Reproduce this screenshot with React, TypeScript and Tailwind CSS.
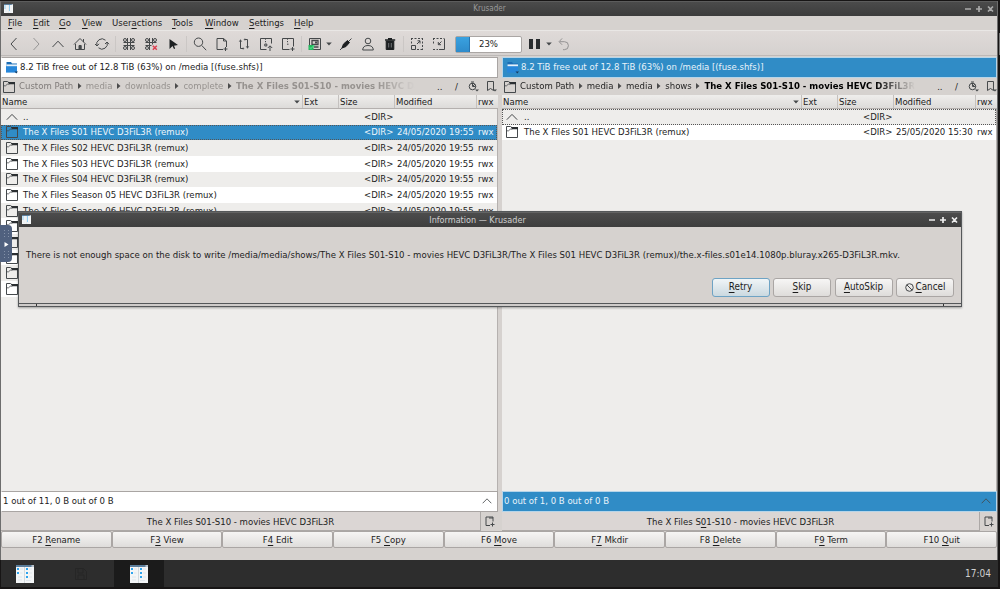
import type { ReactNode } from "react";
import clsx from "clsx";

interface IconProps {
  children: ReactNode;
  className?: string;
  size?: number;
}

function Icon({ children, className, size = 16 }: IconProps) {
  return (
    <svg
      width={size}
      height={size}
      viewBox="0 0 16 16"
      fill="none"
      stroke="currentColor"
      className={clsx("shrink-0", className)}
    >
      {children}
    </svg>
  );
}

function FolderIcon({ className }: { className?: string }) {
  return (
    <svg width="12" height="12" viewBox="0 0 12 12" fill="none" className={clsx("shrink-0", className)}>
      <path d="M.5.5h4L6 1.700h5.500v9.800H.5z" stroke="#45494c" />
      <path d="M5 1h7v2.200H6z" fill="#2b2f32" />
      <path d="M.8 4.800h1.700l1.800-1.600h2" stroke="#45494c" strokeWidth=".8" />
    </svg>
  );
}

function UpIcon({ className }: { className?: string }) {
  return (
    <svg width="12" height="8" viewBox="0 0 12 8" fill="none" className={clsx("shrink-0", className)}>
      <path d="M.8 6.7 6 1.4l5.2 5.3" stroke="currentColor" strokeWidth="1" />
    </svg>
  );
}

function AppIcon({ size }: { size: number }) {
  return (
    <svg width={size} height={size} viewBox="0 0 18 18" className="shrink-0">
      <path d="M0 0h18v18H0z" fill="#f4f6f7" />
      <path d="M0 0h18v2H0z" fill="#5c7e9c" />
      <path d="M15.5 0H18v2h-2.5z" fill="#b9c3cc" />
      <path d="M8.5 2v16" stroke="#d3d9dd" />
      <path d="M1 3h2v2H1zM1 7h2v2H1zM10 3h2v2h-2zM10 7h2v2h-2zM10 11h2v2h-2z" fill="#2da4ef" />
      <path d="M4 4h3M4 8h2.5M13 4h3M13 8h3M13 12h3M10 15.5h5M2 12h4M2 15h4" stroke="#dce3e8" strokeWidth=".8" />
    </svg>
  );
}

function DriveIcon() {
  return (
    <svg width="12" height="12" viewBox="0 0 12 12" className="shrink-0">
      <path d="M.5 0H5l1 1.400h5V5H.5z" fill="#1b6db5" />
      <path d="M.5 2.400h10.500v3H.5z" fill="#e6f2fb" />
      <path d="M0 4.200h11V10.600H0z" fill="#2787da" />
      <path d="M8.500 9.600h3.500L10.300 11.500z" fill="#173c60" />
    </svg>
  );
}

const Down = () => (
  <svg width="6" height="4" viewBox="0 0 6 4" className="shrink-0 fill-[#45484a]">
    <path d="M.2.5h5.600L3 3.500z" />
  </svg>
);

const GRID = (
  <>
    <circle cx="4" cy="4" r="1.500" />
    <circle cx="12" cy="4" r="1.500" />
    <circle cx="4" cy="12" r="1.500" />
    <circle cx="12" cy="12" r="1.500" />
    <path d="M6.500 2v4.500H2.500M9.500 2v4.500h4M2.500 9.500h4V14M13.500 9.500h-4V14M6.500 6.500h3v3h-3z" />
  </>
);

const toolGroups: { icon: ReactNode; faded?: boolean; arrow?: boolean }[][] = [
  [
    { icon: <path d="M10.500 2 5 8l5.500 6" /> },
    { icon: <path d="M5.500 2 11 8l-5.500 6" />, faded: true },
    { icon: <path d="M2.500 11 8 5.200l5.500 5.800" /> },
    {
      icon: (
        <>
          <path d="M2 8.500 8 2.500l6 6M3.500 8v5.500h9V8M11.500 3v3" />
          <path d="M7 9.500h2.200v4H7z" fill="currentColor" />
        </>
      ),
    },
    {
      icon: (
        <>
          <path d="M3 10a5.300 5.300 0 0 1 8.500-5.800M13 6a5.300 5.300 0 0 1-8.500 5.800" />
          <path d="M1 8 3 10l2-2.200M11 8l2-2 2 2.200" />
        </>
      ),
    },
  ],
  [
    { icon: GRID },
    {
      icon: (
        <>
          {GRID}
          <path d="M8.500 8.500h6v6h-6z" fill="#dad5d3" stroke="none" />
          <path d="m9.800 9.800 4 4M13.800 9.800l-4 4" stroke="#db3f50" strokeWidth="1.500" />
        </>
      ),
    },
    { icon: <path d="M4.500 3v10l3-3 1.500 3 1.200-.6L9 9.700l4-.7z" fill="#1d2022" stroke="none" /> },
  ],
  [
    {
      icon: (
        <>
          <circle cx="6.500" cy="6.200" r="4.200" />
          <path d="m9.700 9.400 4.500 4.800" />
        </>
      ),
    },
    {
      icon: (
        <>
          <path d="M9 13.500H3v-11h6.500L12.500 5v6M9.500 2.500V5h3" />
          <path d="M11.500 11v4M9.500 13h4" />
        </>
      ),
    },
    {
      icon: (
        <>
          <path d="M4.500 5v7.500H7M11.500 11V3.500H9" />
          <path d="m3.200 5.500 1.300-2 1.300 2zM10.200 10.500l1.300 2 1.300-2zM7 11.500v2l1-1zM9 2.500v2L8 3.500z" fill="currentColor" strokeWidth=".3" />
        </>
      ),
    },
    {
      icon: (
        <>
          <path d="M8.500 13.500h-6v-11h11v5" />
          <path d="M7.500 2.500v1.200M7.500 5v1.200M6.800 8h2v2h-2z" />
          <path d="M12 15V10M9.800 12 12 9.800 14.200 12" />
        </>
      ),
    },
    {
      icon: (
        <>
          <path d="M9.500 13.500h-7v-11h11v8" />
          <path d="M7.500 2.500v1.200M7.500 5v1.200M7 8.200h1.500" />
          <path d="M12.500 11v4M10.500 13h4" />
        </>
      ),
    },
  ],
  [
    {
      arrow: true,
      icon: (
        <>
          <path d="M2.500 2.500h11v11h-11z" />
          <path d="M5 4.500h6v4H5z" strokeWidth="1.300" />
          <path d="M8 5.500h2v2H8z" fill="currentColor" stroke="none" />
          <path d="M1.500 9h5v5h-5z" fill="#23b35b" stroke="none" />
          <path d="M7 11h4.500" strokeWidth="1.500" />
          <path d="m2.500 11.500 1.300 1.200 3.500-3.500" stroke="#41dc80" strokeWidth="1.300" />
        </>
      ),
    },
    {
      icon: (
        <>
          <path d="m2 14 3.500-3.500M10.500 5.500l3-3" />
          <path d="m5.500 8 4-3.500 2 2-3.500 4-4 1.500z" fill="#1d2022" stroke="#1d2022" />
        </>
      ),
    },
    {
      icon: (
        <>
          <circle cx="8" cy="5" r="2.800" />
          <path d="M2.700 14c0-3 2-4.500 5.300-4.500s5.300 1.500 5.300 4.500z" />
        </>
      ),
    },
    {
      icon: (
        <>
          <path d="M4.200 5h7.600v8.500H4.200z" fill="#1d2022" stroke="#1d2022" />
          <path d="M3 4h10.200M6 2.700h4" stroke="#1d2022" strokeWidth="1.500" />
          <path d="M6.700 7v4.500M9.300 7v4.500" stroke="#85898b" strokeWidth=".8" />
        </>
      ),
    },
  ],
  [
    {
      icon: (
        <>
          <path d="M2.500 9.500h4v4h-4zM8 8l3-3M8.500 4.800H11v2.700" />
          <path d="M2 2.500h12M2.500 2v6M13.500 2v12M8 13.500h6" strokeDasharray="2 1.500" />
        </>
      ),
    },
    {
      icon: (
        <>
          <path d="M8 13.500h5.500V2.500" />
          <path d="M10.500 5.500 7.500 8.500M7.300 6v2.700h2.700" />
          <path d="M2 2.500h11M2.500 2v7M2 13.500h5" strokeDasharray="2 1.500" />
        </>
      ),
    },
  ],
];

function Toolbar() {
  return (
    <div className="flex h-[26px] items-center border-y border-t-[#e9e7e5] border-b-[#bdb9b7] bg-gradient-to-b from-[#dfdad8] to-[#d5d1cf] pt-0.5 pl-0.5 text-[#45484a]">
      {toolGroups.map((group, i) => (
        <div key={i} className="flex items-center">
          {i > 0 && <span className="mx-0.5 h-4 w-px bg-[#cbc7c5]" />}
          {group.map((tool, j) => (
            <div key={j} className={clsx("flex items-center", tool.arrow ? "w-[31px]" : "w-[22px]")}>
              <Icon className={clsx("mx-[3px]", tool.faded && "opacity-45")} size={16}>
                {tool.icon}
              </Icon>
              {tool.arrow && <Down />}
            </div>
          ))}
        </div>
      ))}
      <div className="relative ml-[5px] h-[17px] w-[67px] rounded-xs border border-[#aaa6a4] bg-white">
        <div className="h-full w-3.5 border-r border-[#2675b0] bg-gradient-to-b from-[#3aa2e0] to-[#2e8bcb]" />
        <span className="absolute inset-0 flex items-center justify-center text-[#222]">23%</span>
      </div>
      <div className="ml-[7px] flex gap-[3px]">
        <span className="h-2.5 w-1 bg-[#292c2e]" />
        <span className="h-2.5 w-1 bg-[#292c2e]" />
      </div>
      <div className="ml-[6px]">
        <Down />
      </div>
      <Icon className="ml-1 opacity-50" size={15}>
        <path d="M4 5h5a4.200 4.200 0 0 1 0 8.500H7.500M6.500 1.500 3.300 5l3.200 3.300" />
      </Icon>
    </div>
  );
}

// label with its keyboard accelerator underlined
function Accel({ text }: { text: string }) {
  const at = text.indexOf("&");
  return (
    <span className="whitespace-pre">
      {text.slice(0, at)}
      <span className="underline underline-offset-2">{text[at + 1]}</span>
      {text.slice(at + 2)}
    </span>
  );
}

const menus = [
  { label: "&File", width: "w-[25px]" },
  { label: "&Edit", width: "w-[26px]" },
  { label: "&Go", width: "w-[23px]" },
  { label: "&View", width: "w-[30px]" },
  { label: "User&actions", width: "w-[60px]" },
  { label: "&Tools", width: "w-[33px]" },
  { label: "&Window", width: "w-[44px]" },
  { label: "&Settings", width: "w-[45px]" },
  { label: "&Help", width: "w-[30px]" },
];

function WindowControls({ className }: { className?: string }) {
  return (
    <svg width="30" height="8" viewBox="0 0 30 8" fill="none" stroke="currentColor" strokeWidth="1.700" className={className}>
      <path d="M1 4h6M12 4h6M15 1v6M24 1.500l5 5M29 1.500l-5 5" />
    </svg>
  );
}

interface Row {
  name: string;
  date?: string;
}

interface PanelProps {
  active?: boolean;
  crumbs: string[];
  rows: Row[];
  totals: string;
  tab: ReactNode;
}

function Panel({ active, crumbs, rows, totals, tab }: PanelProps) {
  return (
    <div className={clsx("flex min-w-0 flex-col", active ? "w-[495px]" : "w-[497px]")}>
      <div
        className={clsx(
          "flex h-[21px] items-center gap-0.5 border pl-1",
          active ? "border-[#b6d5e9] bg-[#308cc6] text-[#e9f3fa]" : "border-[#a9a5a3] border-l-white bg-white"
        )}
      >
        <DriveIcon />
        <span className="pb-px whitespace-nowrap">8.2 TiB free out of 12.8 TiB (63%) on /media [(fuse.shfs)]</span>
      </div>
      <div className="flex h-[17px] items-center pl-0.5">
        <FolderIcon />
        <div
          className={clsx(
            "ml-1 flex w-[396px] items-center overflow-hidden pb-px whitespace-nowrap [mask-image:linear-gradient(to_right,black_90%,transparent)]",
            active ? "text-[#242424]" : "text-[#96928f]"
          )}
        >
          {crumbs.map((crumb, i) => (
            <div key={i} className="flex items-center">
              {i > 0 && (
                <svg width="4" height="6" viewBox="0 0 4 6" className="mx-[4.300px] fill-[#4b4b4b]">
                  <path d="M0 0v6l3.500-3z" />
                </svg>
              )}
              <span
                className={clsx(
                  i === crumbs.length - 1 && "font-bold",
                  !active && i === 0 && "text-[#807c7a]",
                  active && i === crumbs.length - 1 && "text-black"
                )}
              >
                {crumb}
              </span>
            </div>
          ))}
        </div>
        <span className="ml-[22px] w-[18px]">..</span>
        <span className="w-[13px]">/</span>
        <svg width="11" height="11" viewBox="0 0 11 11" fill="none" stroke="#45484a" className="mr-[7px]">
          <circle cx="4.500" cy="5.500" r="3.300" />
          <path d="M3 1h3M4.500 2v3.500L7 3M5 5.500h2.500" />
          <path d="M7 8.500h4l-2 2z" fill="#45484a" stroke="none" />
        </svg>
        <svg width="11" height="11" viewBox="0 0 11 11" fill="none" stroke="#45484a">
          <path d="M1.500 9.500v-9h6v9L4.500 7.500z" />
          <path d="M7 8.500h4l-2 2z" fill="#45484a" stroke="none" />
        </svg>
      </div>
      <div className="flex h-[14px] items-center border-b border-[#b4b0ae] bg-gradient-to-b from-[#efeeec] to-[#dddbd9]">
        <div className="flex grow items-center justify-between pr-0.5 pl-[1px]">
          Name
          <Down />
        </div>
        <div className="flex h-full w-9 items-center border-l border-[#c4c1bf] pl-[1px]">Ext</div>
        <div className="flex h-full w-14 items-center border-l border-[#c4c1bf] pl-[1px]">Size</div>
        <div className="flex h-full w-[82px] items-center border-l border-[#c4c1bf] pl-[1px]">Modified</div>
        <div className="flex h-full w-[22px] items-center border-l border-[#c4c1bf] pl-[1px]">rwx</div>
      </div>
      <div className="grow border-r border-[#b5b1af] bg-[#eeedeb]">
        {rows.map((row, i) => {
          const selected = !active && i === 1;
          const focused = selected || (active && i === 0);
          const iconGap = active ? "ml-[3px] mr-px" : "ml-1";
          return (
            <div
              key={i}
              className={clsx(
                "flex h-[15.650px] items-center border border-dotted",
                selected ? "bg-[#308cc6] text-[#eef6fb]" : i % 2 === 1 && "bg-white",
                focused ? "border-[#555]" : "border-transparent"
              )}
            >
              {i === 0 ? <UpIcon className={clsx(iconGap, "text-[#45484a]")} /> : <FolderIcon className={iconGap} />}
              <span className="grow pl-[5px] whitespace-nowrap">{row.name}</span>
              {row.name && <span className="w-[33px]">&lt;DIR&gt;</span>}
              <span className="w-[81px] whitespace-nowrap">{row.date}</span>
              <span className="w-[18px]">{row.date && "rwx"}</span>
            </div>
          );
        })}
      </div>
      <div
        className={clsx(
          "flex h-[21px] items-center justify-between border pr-[5px] pb-px pl-[1px]",
          active ? "border-[#b6d5e9] bg-[#308cc6] text-[#e9f3fa]" : "border-[#a9a5a3] border-l-white bg-white text-[#222]"
        )}
      >
        {totals}
        <UpIcon className="w-2.5 text-[#45484a]" />
      </div>
      <div className="flex h-[19px] items-stretch">
        <div className="flex grow items-center justify-center border-r border-b border-[#aca8a6] bg-[#dbd6d4] pt-px">{tab}</div>
        <div className="flex w-[17px] items-center justify-center">
          <svg width="10" height="11" viewBox="0 0 10 11" fill="none" stroke="#45484a">
            <path d="M5 9.500H1V1h7v4.500M4 2h4" />
            <path d="M7.500 6.500v4M5.500 8.500h4" />
          </svg>
        </div>
      </div>
    </div>
  );
}

const leftRows: Row[] = [
  { name: ".." },
  ...["S01", "S02", "S03", "S04", "Season 05", "Season 06"].map((s) => ({
    name: `The X Files ${s} HEVC D3FiL3R (remux)`,
    date: "24/05/2020 19:55",
  })),
  { name: "" },
  { name: "" },
  { name: "" },
  { name: "" },
  { name: "" },
];

const rightRows: Row[] = [
  { name: ".." },
  { name: "The X Files S01 HEVC D3FiL3R (remux)", date: "25/05/2020 15:30" },
];

const functionKeys = [
  "F2 &Rename",
  "F&3 View",
  "F&4 Edit",
  "F5 &Copy",
  "F6 &Move",
  "F&7 Mkdir",
  "F8 &Delete",
  "F&9 Term",
  "F10 &Quit",
];

function Dialog() {
  const button = "flex h-[19px] w-[58px] items-center justify-center rounded-[3px] border bg-gradient-to-b pb-px text-[9.800px]";
  return (
    <div className="absolute top-[211px] left-[18px] flex h-24 w-[944px] flex-col border border-[#55585a] bg-[#d6d2cf] shadow-[0_1px_2px_#0005]">
      <div className="flex h-[15px] items-center justify-between border-t border-[#646464] bg-gradient-to-b from-[#4c4c4c] to-[#3e3e3e] px-[3px] pb-px text-[#d0d0d0]">
        <AppIcon size={9} />
        <span className="pr-1 text-[9px]">Information — Krusader</span>
        <WindowControls className="text-[#eee]" />
      </div>
      <p className="mt-[21px] ml-[7px] leading-[14px] tracking-[0.016px] whitespace-nowrap">
        There is not enough space on the disk to write /media/media/shows/The X Files S01-S10 - movies HEVC D3FiL3R/The X
        Files S01 HEVC D3FiL3R (remux)/the.x-files.s01e14.1080p.bluray.x265-D3FiL3R.mkv.
      </p>
      <div className="mt-4 mr-[7px] flex justify-end gap-[3.500px]">
        <div className={clsx(button, "border-[#6ea3c4] from-[#f0f5f7] to-[#cbd9e0]")}>
          <Accel text="&Retry" />
        </div>
        <div className={clsx(button, "border-[#aaa6a4] from-[#f7f6f5] to-[#dedcda]")}>
          <Accel text="&Skip" />
        </div>
        <div className={clsx(button, "border-[#aaa6a4] from-[#f7f6f5] to-[#dedcda]")}>
          <Accel text="&AutoSkip" />
        </div>
        <div className={clsx(button, "gap-0.5 border-[#aaa6a4] from-[#f7f6f5] to-[#dedcda]")}>
          <svg width="9" height="9" viewBox="0 0 9 9" fill="none" stroke="#45484a">
            <circle cx="4.500" cy="4.500" r="3.800" />
            <path d="m2 2 5 5" />
          </svg>
          <Accel text="&Cancel" />
        </div>
      </div>
      <div className="mt-auto flex h-[3px] border-t border-[#55585a] bg-[#cfccca]">
        <span className="w-[18px] border-r border-[#333]" />
        <span className="grow" />
        <span className="w-[18px] border-l border-[#333]" />
      </div>
    </div>
  );
}

export default function App() {
  return (
    <div className="relative flex h-[589px] w-[1000px] flex-col overflow-hidden bg-[#171515] pt-px font-['DejaVu_Sans_Condensed','DejaVu_Sans',sans-serif] text-[9.500px] leading-[10px] font-stretch-condensed text-[#1c1c1c]">
      <div className="flex h-[559px] w-[998px] flex-col border-r border-l border-[#6d6d6d] bg-[#d6d2cf]">
        <div className="flex h-[15px] shrink-0 items-center justify-between border-t border-[#5c5c5c] bg-gradient-to-b from-[#4b4b4b] to-[#3c3c3c] px-[3px] pb-px text-[#9a9a9a]">
          <AppIcon size={9} />
          <span className="pl-0.5 text-[8px]">Krusader</span>
          <WindowControls className="text-[#aaa]" />
        </div>
        <div className="flex h-[14px] shrink-0 items-center pb-px pl-[7px]">
          {menus.map((menu) => (
            <span key={menu.label} className={menu.width}>
              <Accel text={menu.label} />
            </span>
          ))}
        </div>
        <Toolbar />
        <div className="flex h-[475px] shrink-0 gap-1 pt-px">
          <Panel
            crumbs={["Custom Path", "media", "downloads", "complete", "The X Files S01-S10 - movies HEVC D3FiL3R"]}
            rows={leftRows}
            totals="1 out of 11, 0 B out of 0 B"
            tab="The X Files S01-S10 - movies HEVC D3FiL3R"
          />
          <Panel
            active
            crumbs={["Custom Path", "media", "media", "shows", "The X Files S01-S10 - movies HEVC D3FiL3R"]}
            rows={rightRows}
            totals="0 out of 1, 0 B out of 0 B"
            tab={<Accel text="The X Files S&01-S10 - movies HEVC D3FiL3R" />}
          />
        </div>
        <div className="flex h-[17px] shrink-0">
          {functionKeys.map((key) => (
            <div
              key={key}
              className="flex grow basis-0 items-center justify-center rounded-xs border border-[#aaa6a4] bg-gradient-to-b from-[#f6f5f4] to-[#dfdddb]"
            >
              <Accel text={key} />
            </div>
          ))}
        </div>
      </div>
      <div className="ml-px flex h-[27px] w-[997px] items-center bg-[#2d2d2d]">
        <div className="flex w-12 justify-center">
          <AppIcon size={18} />
        </div>
        <div className="flex w-[65px] justify-center pr-0.5 text-[#262626]">
          <Icon>
            <path d="M2.500 13.500v-11h8l3 3v8zM5 3v4h5V3M5 13v-4h6v4" />
          </Icon>
        </div>
        <div className="flex h-full w-[50px] items-center justify-center bg-[#1b1b1b]">
          <AppIcon size={18} />
        </div>
        <span className="ml-auto pr-[7px] text-[10px] text-[#cfcfcf]">17:04</span>
      </div>
      <Dialog />
      <div className="absolute top-[225px] left-0 flex h-[37px] w-3 items-center justify-center rounded-r-[4px] bg-[#50617f]">
        <svg width="10" height="30" viewBox="0 0 10 30">
          <path d="M3.500 1v9M7.500 1v9M3.500 22v8M7.500 22v8" stroke="#8492a9" strokeDasharray="1 2" />
          <path d="M3.500 13v5l4-2.500z" fill="#fff" />
        </svg>
      </div>
      <div className="absolute top-[33px] right-0 h-[22px] w-px bg-[#777]" />
    </div>
  );
}
